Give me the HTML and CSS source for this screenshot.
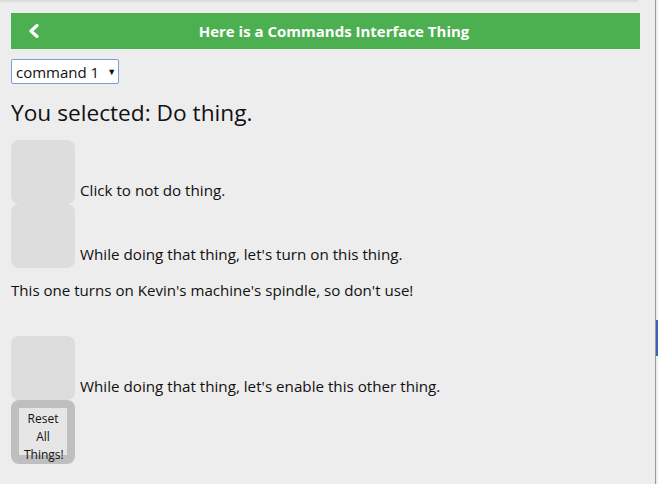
FILE: index.html
```html
<!DOCTYPE html>
<html>
<head>
<meta charset="utf-8">
<link rel="stylesheet" href="styles.css">
</head>
<body>
<div class="window">
  <div class="main">
    <div class="topshadow"></div>
    <div class="page">
      <div class="header">
        <div class="back">
          <svg width="12" height="14" viewBox="0 0 12 14"><polyline points="9,1.5 3,7 9,12.5" fill="none" stroke="#fff" stroke-width="3.2" stroke-linecap="round" stroke-linejoin="round"/></svg>
        </div>
        <div class="title">Here is a Commands Interface Thing</div>
      </div>
      <div class="select"><span>command 1</span><span class="arrow">▼</span></div>
      <h1 class="selected">You selected: Do thing.</h1>
      <div class="row"><div class="btn"></div><span class="label">Click to not do thing.</span></div>
      <div class="row"><div class="btn"></div><span class="label">While doing that thing, let's turn on this thing.</span></div>
      <p class="note">This one turns on Kevin's machine's spindle, so don't use!</p>
      <div class="row"><div class="btn"></div><span class="label">While doing that thing, let's enable this other thing.</span></div>
      <div class="reset"><div class="reset-inner">Reset All Things!</div></div>
    </div>
  </div>
  <div class="edge"><div class="edge-light"></div><div class="edge-blue"></div></div>
</div>
</body>
</html>
```
FILE: styles.css
```css
html, body {
  margin: 0;
  padding: 0;
  background: #ededed;
  height: 100%;
}
body {
  font-family: "Open Sans", "Noto Sans", sans-serif;
  color: #111;
  overflow: hidden;
}
.window {
  display: flex;
  height: 484px;
}
.main {
  flex: 1;
  display: flex;
  flex-direction: column;
}
.topshadow {
  height: 3px;
  width: 638px;
  background: linear-gradient(#d6d6d6, #ededed);
}
.page {
  padding: 10px 0 0 11px;
  width: 629px;
}
.header {
  height: 36px;
  background: #4caf50;
  display: flex;
  align-items: center;
  color: #fff;
}
.back {
  width: 37px;
  padding-left: 17px;
  box-sizing: border-box;
  display: flex;
  align-items: center;
  height: 100%;
}
.title {
  flex: 1;
  text-align: center;
  font-weight: bold;
  font-size: 15px;
  padding-right: 20px;
}
.select {
  margin-top: 10px;
  width: 108px;
  height: 25px;
  box-sizing: border-box;
  border: 1px solid #7a9fd6;
  border-radius: 2px;
  background: #fff;
  display: flex;
  align-items: center;
  padding-left: 4px;
  font-size: 15px;
}
.arrow {
  font-size: 9px;
  margin-left: 8px;
}
.selected {
  margin: 14px 0 0;
  font-weight: normal;
  font-size: 22.7px;
  line-height: 30px;
}
.row {
  display: flex;
  align-items: flex-end;
}
.selected + .row { margin-top: 12px; }
.btn {
  width: 64px;
  height: 64px;
  border-radius: 8px;
  background: #dddddd;
  flex: none;
}
.label {
  font-size: 15.2px;
  line-height: 20px;
  padding-left: 5px;
  padding-bottom: 4px;
}
.note {
  font-size: 15.1px;
  line-height: 20px;
  margin: 12px 0 36px;
}
.reset {
  width: 64px;
  height: 64px;
  box-sizing: border-box;
  border-radius: 8px;
  background: #bfbfbf;
  padding: 8px 8px 0 8px;
}
.reset-inner {
  height: 45px;
  padding: 2px 5px 0;
  background: #e6e6e6;
  font-size: 12px;
  line-height: 18px;
  text-align: center;
  color: #111;
}
.edge {
  width: 3px;
  flex: none;
  display: flex;
  flex-direction: column;
  border-left: 1px solid #9a9a9a;
  box-sizing: border-box;
  background: #ededed;
}
.edge-light {
  height: 292px;
}
.edge-blue {
  margin-top: 28px;
  height: 36px;
  background: #3b63b8;
}
```
